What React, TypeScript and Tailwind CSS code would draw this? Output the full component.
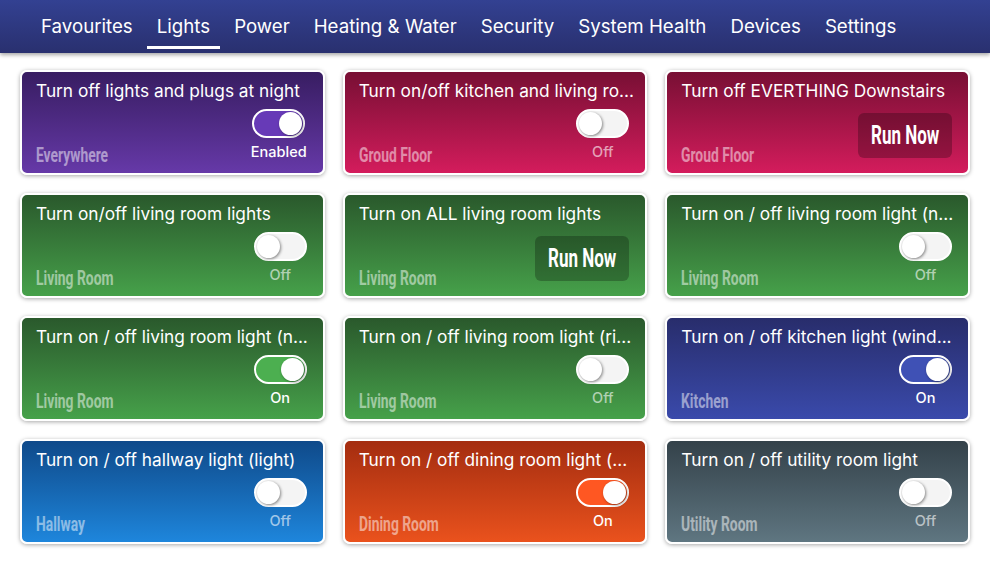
import React from "react";

type Card = {
  title: string;
  room: string;
  grad: string;
  kind: "toggle" | "run";
  on?: boolean;
  status?: string;
  track?: string;
};

const cards: Card[] = [
  { title: "Turn off lights and plugs at night", room: "Everywhere", grad: "bg-gradient-to-b from-[#381d62] to-[#6639a8]", kind: "toggle", on: true, status: "Enabled", track: "bg-[#673ab7]" },
  { title: "Turn on/off kitchen and living ro...", room: "Groud Floor", grad: "bg-gradient-to-b from-[#780f34] to-[#d41c5c]", kind: "toggle", on: false, status: "Off" },
  { title: "Turn off EVERTHING Downstairs", room: "Groud Floor", grad: "bg-gradient-to-b from-[#780f34] to-[#d41c5c]", kind: "run" },
  { title: "Turn on/off living room lights", room: "Living Room", grad: "bg-gradient-to-b from-[#2a592c] to-[#46a14a]", kind: "toggle", on: false, status: "Off" },
  { title: "Turn on ALL living room lights", room: "Living Room", grad: "bg-gradient-to-b from-[#2a592c] to-[#46a14a]", kind: "run" },
  { title: "Turn on / off living room light (n...", room: "Living Room", grad: "bg-gradient-to-b from-[#2a592c] to-[#46a14a]", kind: "toggle", on: false, status: "Off" },
  { title: "Turn on / off living room light (n...", room: "Living Room", grad: "bg-gradient-to-b from-[#2a592c] to-[#46a14a]", kind: "toggle", on: true, status: "On", track: "bg-[#4caf50]" },
  { title: "Turn on / off living room light (ri...", room: "Living Room", grad: "bg-gradient-to-b from-[#2a592c] to-[#46a14a]", kind: "toggle", on: false, status: "Off" },
  { title: "Turn on / off kitchen light (wind...", room: "Kitchen", grad: "bg-gradient-to-b from-[#282d6c] to-[#3a4aab]", kind: "toggle", on: true, status: "On", track: "bg-[#3f51b5]" },
  { title: "Turn on / off hallway light (light)", room: "Hallway", grad: "bg-gradient-to-b from-[#0f4a8a] to-[#1e86dc]", kind: "toggle", on: false, status: "Off" },
  { title: "Turn on / off dining room light (...", room: "Dining Room", grad: "bg-gradient-to-b from-[#a42d10] to-[#ea521d]", kind: "toggle", on: true, status: "On", track: "bg-[#ff5722]" },
  { title: "Turn on / off utility room light", room: "Utility Room", grad: "bg-gradient-to-b from-[#34424a] to-[#5f7681]", kind: "toggle", on: false, status: "Off" },
];

const navItems = ["Favourites", "Lights", "Power", "Heating & Water", "Security", "System Health", "Devices", "Settings"];

const sans = "font-['Inter','Open_Sans',sans-serif]";
const narrow = "font-['Roboto','Liberation_Sans',sans-serif]";

function Toggle({ on, track }: { on: boolean; track?: string }) {
  return (
    <div
      className={`flex h-[29px] w-[53px] items-center rounded-full border-2 border-white p-[1px] ${
        on ? `${track} justify-end` : "bg-[#f4f4f4] justify-start"
      }`}
    >
      <div className="h-[23px] w-[23px] rounded-full bg-white shadow-[1px_1px_3px_rgba(0,0,0,0.45)]" />
    </div>
  );
}

function CardView({ c }: { c: Card }) {
  return (
    <div
      className={`flex h-[105px] min-w-0 flex-col rounded-[7px] border-2 border-white pl-[14px] pr-[12px] pt-[7px] pb-[5px] text-white shadow-[0_1px_4px_rgba(0,0,0,0.35)] ${c.grad}`}
    >
      <div className={`overflow-hidden whitespace-nowrap text-[17.3px] leading-[24px] ${sans}`}>{c.title}</div>
      <div className="flex flex-1 items-start justify-between pr-[4px]">
        <div className="self-end whitespace-nowrap">
          <span
            className={`inline-block origin-left scale-x-[0.66] text-[21px] font-bold leading-[24px] text-white/50 ${narrow}`}
          >
            {c.room}
          </span>
        </div>
        {c.kind === "toggle" ? (
          <div className="mt-[6px] flex flex-col items-center">
            <Toggle on={!!c.on} track={c.track} />
            <div
              className={`mt-[5px] text-[14.5px] font-medium leading-[18px] ${sans} ${
                c.on ? "text-white" : "text-white/60"
              }`}
            >
              {c.status}
            </div>
          </div>
        ) : (
          <div className="mt-[10px] flex h-[45px] w-[94px] items-center justify-center rounded-[6px] bg-black/25 text-white">
            <span
              className={`inline-block scale-x-[0.68] whitespace-nowrap text-[25px] font-bold leading-[28px] ${narrow}`}
            >
              Run Now
            </span>
          </div>
        )}
      </div>
    </div>
  );
}

export default function App() {
  return (
    <div className="min-h-[569px] w-[990px] bg-white">
      <nav className="relative z-10 flex h-[53px] items-start gap-[4px] bg-gradient-to-b from-[#334192] to-[#29306f] pl-[31px] shadow-[0_2px_4px_rgba(0,0,0,0.35)]">
        {navItems.map((n) => (
          <div
            key={n}
            className={`flex h-[49px] items-center whitespace-nowrap px-[10px] pt-[8px] text-[18.7px] text-white ${sans} ${
              n === "Lights" ? "border-b-[3px] border-white" : "border-b-[3px] border-transparent"
            }`}
          >
            {n}
          </div>
        ))}
      </nav>
      <div className="grid grid-cols-3 gap-[18px] px-[20px] pt-[17px] pb-[20px]">
        {cards.map((c, i) => (
          <CardView key={i} c={c} />
        ))}
      </div>
    </div>
  );
}
